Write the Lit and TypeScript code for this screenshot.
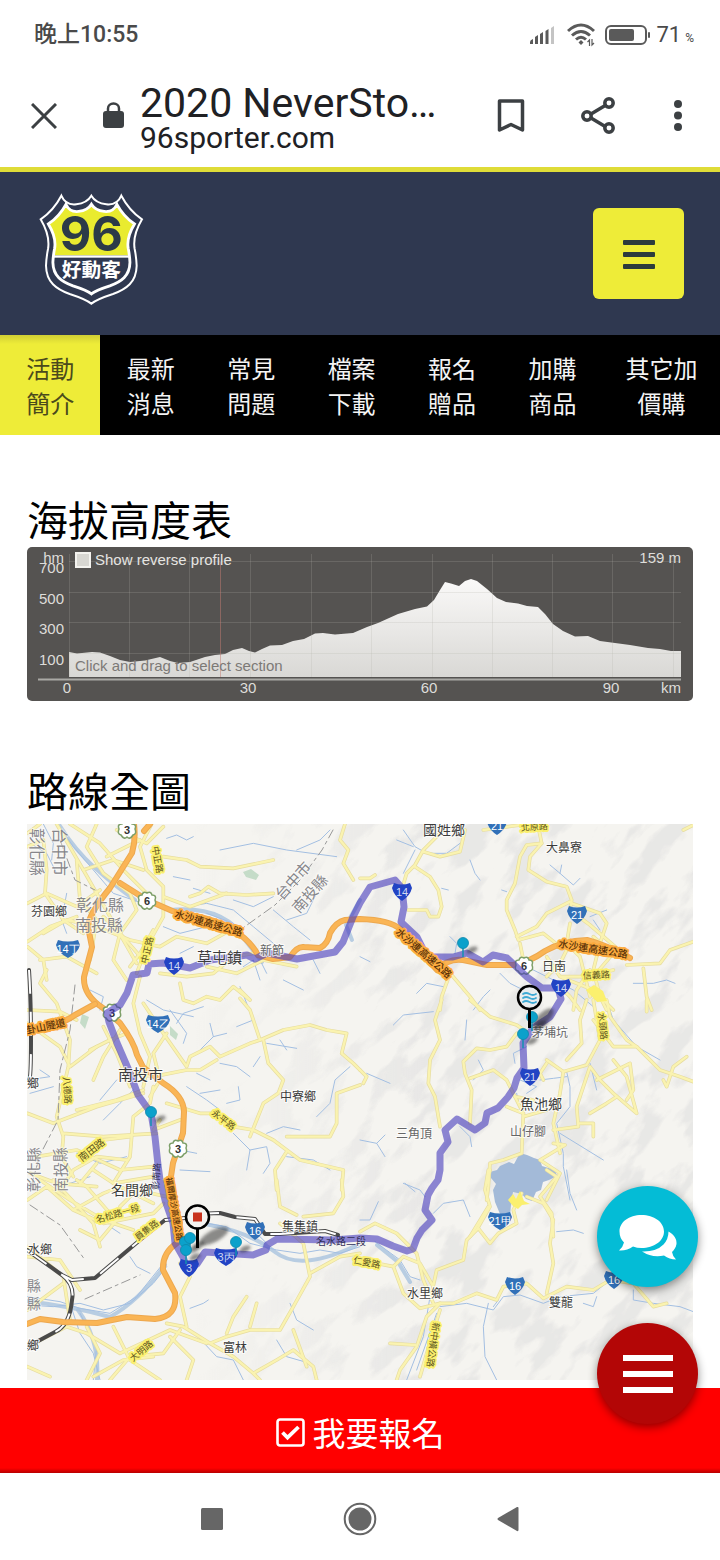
import { LitElement, html, svg, css } from "lit";
import { customElement, property } from "lit/decorators.js";

const NAV = [
  ["活動", "簡介"],
  ["最新", "消息"],
  ["常見", "問題"],
  ["檔案", "下載"],
  ["報名", "贈品"],
  ["加購", "商品"],
  ["其它加", "價購"],
];

/* ---------- elevation profile ---------- */

const PROFILE =
  "M69 652L77 653.5 92 652 100 652.5 110 656 120 660 130 662 145 660.5 160 657 170 661 178 663 190 662 205 657 215 655 225 654 233 650 242 648 249 651 255 652.5 262 649 270 645.5 282 645 293 641 304 639 315 633.5 323 633 335 634.5 353 633 367 627 378 623 398 614 415 609 427 606.5 434 600 440 590 445 582 451 583.5 459 586 465 581 471 579 477 581 487 589 497 598 506 602 518 603.5 527 606 538 607 545 614 553 624 563 631 575 636.5 588 636 600 641 615 643 630 645 648 648 660 649 671 651 681 651V677H69Z";
const GRID_X = [69, 129, 189, 250, 311, 371, 432, 492, 552, 612, 673];
const GRID_Y = [561, 592, 622, 653];
const Y_LABELS: [string, number][] = [["hm", 563], ["700", 573], ["500", 604], ["300", 634], ["100", 665]];
const X_LABELS: [string, number][] = [["0", 67], ["30", 248], ["60", 429], ["90", 611]];

/* ---------- route map ---------- */

const ROUTE =
  "M183 1257L175 1243 173 1223 165 1200 160 1180 158 1165 155 1137 151 1113 138 1095 130 1073 117 1043 109 1022 107 1013 120 1005 127 993 133 975 147 973 149 964 163 963 180 966 190 968 210 960 247 955 255 959 267 953 297 959 335 952 343 942 353 917 360 903 370 887 395 880 402 888 404 907 401 922 417 937 427 957 453 957 467 953 483 962 493 955 507 958 527 977 542 988 558 988 561 999 550 1017 533 1028 523 1043 524 1068 517 1078 514 1088 508 1097 498 1108 487 1113 485 1123 475 1130 457 1119 445 1130 448 1142 440 1153 440 1170 438 1180 432 1188 428 1195 425 1210 432 1220 422 1230 417 1238 413 1249 407 1251 393 1246 377 1239 360 1238 333 1240 277 1239 267 1245 266 1250 253 1255 205 1252 197 1264 187 1268Z";

const HIGHWAYS = [
  "M150 824L144 831M134 824Q136 840 132 853L110 888Q88 915 88 927L92 947 84 977Q83 995 103 1008L120 1023Q134 1042 137 1055L143 1067 163 1083Q184 1096 184 1112L183 1133 173 1163 170 1183 175 1205 180 1223 177 1243Q162 1253 163 1270L175 1293Q178 1317 155 1319L127 1317 97 1323 63 1322 40 1319 27 1324",
  "M27 1031Q60 1026 75 1015L95 1004",
  "M120 883L147 900 177 913Q215 918 233 930 250 940 258 955L273 959 290 957Q297 946 304 947L320 948Q328 944 330 933 336 922 345 920L360 919Q390 920 400 929L413 943 437 970Q448 958 463 960L487 965 513 965Q530 962 545 951 562 941 587 940 606 945 630 958",
];

/* Each tile holds paths drawn at three units per map unit from its own origin. */
const TILES = [
  {
    x: 20, y: 760,
    roads: [
      "M110 192L190 330 270 470 350 610M22 260L70 240 80 330 75 400 130 480 190 520M150 192L240 250 310 330 380 400M230 192L200 260 250 340 330 400 350 450 300 520 370 600M22 430L80 400 170 440 240 390M22 545L90 500 170 470",
      "M395 192L360 260 380 330 430 380 430 470 380 560 350 640M290 210L380 250 430 200M260 290L360 240M190 330L280 300 370 330M430 290L500 300 540 320 640 325 760 300M510 410L540 400 565 380 600 400 680 405 760 400M430 410L510 440 620 400",
      "M70 520L140 480 230 500 330 540 420 560 470 530 560 550 650 500M60 600L140 590 230 640M250 470L300 520 280 600 320 660M400 510L360 580 330 620M560 620L650 640 730 600 830 620M975 192L960 240 985 270 970 310 1000 360",
      "M22 220L60 192M22 560L70 600 80 660M170 300L180 420 230 480 210 600M420 640L500 650 580 640 640 590 700 580",
    ],
    rivers: [
      "M115 195L160 260 220 330 280 400 370 430M440 235L470 225 500 240 520 230M140 400L125 480 140 520M500 440L560 430 640 450 700 500 760 550M560 460L640 490 700 560 740 640M600 270L700 250 800 270 950 290M830 270L900 240 930 210M640 420L700 440 760 410M760 450L820 500 870 540M800 480L860 460 890 400M880 600L900 640M460 350L510 360M570 400L520 385",
      "M30 250L80 280 110 340M70 192L100 250 95 300M430 500L480 520 560 500M670 620L700 600 720 660M480 580L520 560",
    ],
  },
  {
    x: 360, y: 810,
    roads: [
      "M250 60L190 120 165 165 140 190 125 240M165 170L210 200 235 240 245 290 235 320 210 320 200 300 145 300M190 125L240 140 300 125 315 60M370 60L480 45 560 60M535 50L545 100 510 140 505 180 560 215 620 230 635 270 630 300 690 345 800 440",
      "M545 100L500 105 480 140 465 220 440 270 440 300 465 360 475 390 550 370 600 410 720 395M630 275L560 310 530 350 470 380M480 400L490 450M635 280L720 310 740 340 720 400 700 480 720 560 740 600M630 340L620 400 660 440 690 560",
      "M800 465L900 460 930 420 1000 395M850 475L860 560 875 600M270 490L245 560 240 600M275 495L330 560 360 600M560 440L600 500 700 540 760 600M600 500L680 500 760 480M630 400L600 460 560 500M690 480L650 540 640 600M590 520L630 560 660 600M700 380L760 430 700 500M0 205L30 205 45 195M970 60L1000 45",
    ],
    rivers: [
      "M130 60L165 110 200 130 260 130 300 100M165 120L130 190M110 90L160 110M570 165L600 190 640 225 660 205M600 190L605 165M690 320L740 300M245 235L265 240M420 490L450 520 530 560M500 470L560 500 640 540 700 590M170 550L200 520 250 530M340 600L370 560 390 540M0 440L30 455M330 150L345 190 360 210M270 380L290 400 285 430M820 520L880 520 920 510 945 520M425 240L440 245M700 330L720 360",
    ],
  },
  {
    x: 20, y: 970,
    roads: [
      "M80 0L60 40 110 100 150 210 145 290 110 440 130 500 125 560 160 620M22 120L120 125 170 150M22 160L120 230 150 290 230 230M22 430L100 460 230 410 370 370M130 490L250 500 410 490M170 420L290 390 370 360M50 560L170 540 300 600 400 590M180 570L250 510 330 500",
      "M480 40L490 90 520 100 560 80 600 90 640 50 690 90 660 60M660 85L690 120 720 210 690 220 600 260 570 230 510 260 500 290 430 190 370 100M720 210L790 180 870 165 920 180 980 190 965 250 1000 280 1020 300M730 210L745 280 790 330 775 370 730 400 710 450 690 500",
      "M360 20L340 100 360 190 390 260 370 350M440 190L400 250 420 330 390 380M250 170L290 250 330 350M300 300L400 320 500 300 540 300 590 270M400 350L390 400 340 440 330 560 280 640M440 400L540 430 580 430 640 470 700 480 760 510 800 540 840 570 970 600 965 660M800 500L930 500 950 460 950 370 1020 345M800 545L765 600 770 660",
      "M220 600L280 640 400 620M30 610L110 640 230 650M230 580L180 640M210 240L270 210 320 190M420 450L400 480 480 450M120 660L160 600 230 560 320 570M300 180L250 260 220 330",
    ],
    rivers: [
      "M380 90L430 120 520 140M450 120L500 190 490 220M540 240L580 200 570 160M580 200L620 190M660 50L700 150 650 170M740 220L830 235M780 210L800 240M600 280L650 290 690 320M700 290L720 260M620 400L660 390 655 350M500 350L560 390 600 420M540 370L600 360M250 450L300 400 340 360M240 390L290 330M22 330L90 320 60 300M30 370L100 350M640 490L690 540 680 600M690 540L740 530 750 580 730 610M800 560L880 570 930 600M480 600L570 605M480 540L530 550M790 30L850 60M150 640L210 620M170 550L240 580 320 560M210 60L250 80 240 120M470 160L490 130 550 110",
      "M740 490L790 470 840 480M890 440L930 400 945 330 990 290M530 310L570 330",
    ],
  },
  {
    x: 360, y: 1000,
    roads: [
      "M245 0L225 60 240 120 210 180 205 250 225 290 240 380M330 0L390 50 470 75 500 95M470 100L440 140 390 150 350 145 310 185 315 220 335 270 330 370M330 235L400 210 440 240 465 290 520 300M560 180L610 215 600 280 580 370 600 460M610 215L680 195 720 120 700 0M680 0L660 60 665 130 620 180",
      "M740 0L750 50 800 120 830 140 900 210 960 230 1000 245M700 60L760 140 830 140M910 240L920 260 940 200 980 170M760 180L800 230 830 340 760 280 720 240 690 200 650 320 655 380 580 390M560 190L540 220 550 240M465 290L490 340 485 460 430 480 390 490 385 560 380 600M490 350L560 330M655 370L700 370 700 410M580 430L615 435 540 480 600 520 560 600",
      "M0 210L20 230 10 250M860 0L860 35M440 320L490 340M710 240L810 190 820 270 800 300M690 340L740 310 770 290",
    ],
    rivers: [
      "M100 75L130 45 220 35M340 240L370 210 355 180M500 140L460 160 465 190M540 240L580 235 620 230M620 215L630 260 630 320 590 370 610 460 610 500 630 600M690 190L710 270M740 0L760 60 830 140 900 180M0 420L50 430 75 470M50 430L75 405M320 60L315 120M20 220L90 250M560 80L530 110M300 380L330 410 335 440M480 240L530 260 500 280M600 400L730 480M470 280L480 330M130 550L180 570 195 590",
    ],
  },
  {
    x: 20, y: 1180,
    roads: [
      "M22 60L80 20 160 90 250 40 300 20 400 70M60 0L150 60 250 120 340 150M100 0L220 130 240 200M160 90L250 130 400 100 430 70M22 200L130 290 150 420M22 230L120 240 180 330M22 390L130 310M22 500L140 440 200 460 300 520 450 450 560 490M280 440L330 540 420 600",
      "M22 560L90 590M440 430L490 440 570 490 620 470 690 450 780 450 820 380 870 290 850 190 780 130M480 250L510 290 480 350 500 440M620 460L640 410 680 350M690 440L710 370M570 490L640 530 700 580 720 600M700 580L770 540 820 510 880 560 890 600M480 450L430 520 330 530 270 600",
      "M870 280L960 230 1020 220M770 0L780 80 830 105M850 110L940 100 970 50 965 0M440 50L350 30 300 80M270 100L200 20 170 0M290 120L240 180 180 150M220 590L310 540 400 530M200 440L240 520 200 600M450 470L520 540 500 600M820 450L860 560",
    ],
    rivers: [
      "M22 350L120 365 180 385 270 400 350 350 390 300 430 250M22 375L100 380 180 370 250 390 330 370 400 310 440 260M330 230L350 260 390 280M150 370L180 460 220 520 240 600M180 400L230 500 220 600M560 130L620 140 690 190 770 210 840 220 900 210 960 220 1020 200M700 150L740 190M510 385L550 370 565 360M520 455L590 530 640 540 670 600M810 370L830 420 880 450M310 110L270 140 300 160M770 480L800 530 870 550",
    ],
  },
  {
    x: 360, y: 1170,
    roads: [
      "M385 0L375 60 390 110 350 180 320 210 310 270 230 300 215 370M355 175L390 220 415 190 470 160 460 120 485 70M500 80L550 100 580 150 570 220 580 280 560 370M0 185L45 160 110 190 170 250 190 330 220 400M0 270L100 290 130 260 180 280 220 350M100 290L130 370 180 415 240 400",
      "M240 400L280 400 350 370 410 390 430 350 500 340 550 385 620 350 700 360 750 330 820 340 880 410 920 400M240 400L200 440 170 530 120 600 110 630M240 420L215 500 180 620M90 520L165 525M330 200L385 110",
      "M560 0L590 20 540 80 575 130 580 200M390 0L380 40",
    ],
    rivers: [
      "M45 215L120 270 150 320 180 330M240 410L320 400 400 420 430 380 480 375 550 400 600 380 700 370 750 330M220 130L250 100 310 90 330 140M210 380L190 500 140 630M385 400L370 470 375 560 410 630M230 430L170 600M400 410L415 390M0 150L30 150 55 95M590 185L640 180 670 190M820 360L820 390 880 400 960 410 1000 425M620 0L630 70 650 120M670 400L700 410 710 380M135 40L165 65",
    ],
  },
];

const WATER = [
  "M490 1172L497 1170 500 1166 509 1162 514 1164 520 1153 527 1155 534 1158 540 1160 542 1166 555 1170 557 1176 549 1180 543 1182 541 1190 536 1192 532 1201 526 1199 522 1194 513 1192 511 1205 510 1216 504 1217 500 1214 495 1202 493 1190 496 1184 491 1178Z",
];

const RIVER_BANDS = [
  "M60 826Q75 850 95 868T135 900",
  "M352 940L346 925 360 900",
  "M170 910Q225 905 245 940L262 962",
  "M27 1301Q75 1307 110 1317 140 1300 165 1265",
  "M78 1310Q100 1340 97 1380",
  "M205 1224Q250 1232 275 1252T355 1246",
  "M377 1245L398 1262 410 1282",
];

type Label = { t: string; x: number; y: number; s: number; r?: number; k?: string };
const LABELS: Label[] = [
  { t: "國姓鄉", x: 423, y: 835, s: 14 },
  { t: "大鼻寮", x: 546, y: 852, s: 12 },
  { t: "芬園鄉", x: 31, y: 916, s: 12 },
  { t: "彰化縣", x: 76, y: 911, s: 16, k: "county" },
  { t: "南投縣", x: 75, y: 931, s: 16, k: "county" },
  { t: "彰化縣", x: 31, y: 828, s: 16, r: 90, k: "county" },
  { t: "台中市", x: 54, y: 828, s: 16, r: 90, k: "county" },
  { t: "台中市", x: 282, y: 901, s: 15, r: -48, k: "county" },
  { t: "南投縣", x: 299, y: 914, s: 15, r: -48, k: "county" },
  { t: "草屯鎮", x: 197, y: 963, s: 15 },
  { t: "新節", x: 260, y: 955, s: 12, k: "soft" },
  { t: "日南", x: 542, y: 971, s: 12 },
  { t: "南投市", x: 118, y: 1080, s: 15 },
  { t: "中寮鄉", x: 280, y: 1101, s: 12 },
  { t: "三角頂", x: 396, y: 1138, s: 12, k: "soft" },
  { t: "茅埔坑", x: 532, y: 1037, s: 12, k: "soft" },
  { t: "魚池鄉", x: 520, y: 1109, s: 14 },
  { t: "山仔腳", x: 510, y: 1136, s: 12, k: "soft" },
  { t: "名間鄉", x: 111, y: 1195, s: 14 },
  { t: "集集鎮", x: 282, y: 1231, s: 12 },
  { t: "水里鄉", x: 407, y: 1298, s: 12 },
  { t: "雙龍", x: 549, y: 1307, s: 12 },
  { t: "富林", x: 223, y: 1352, s: 12 },
  { t: "水鄉", x: 28, y: 1254, s: 12 },
  { t: "鄉", x: 27, y: 1088, s: 12 },
  { t: "鄉", x: 27, y: 1350, s: 12 },
  { t: "縣", x: 27, y: 1291, s: 14, k: "county" },
  { t: "縣", x: 27, y: 1309, s: 14, k: "county" },
  { t: "彰化縣", x: 39, y: 1192, s: 15, r: -90, k: "county" },
  { t: "南投縣", x: 66, y: 1192, s: 15, r: -90, k: "county" },
  { t: "水沙連高速公路", x: 174, y: 917, s: 10, r: 16, k: "hwy" },
  { t: "水沙連高速公路", x: 395, y: 933, s: 10, r: 41, k: "hwy" },
  { t: "水沙連高速公路", x: 558, y: 947, s: 10, r: 9, k: "hwy" },
  { t: "卦山隧道", x: 27, y: 1034, s: 10, r: -12, k: "hwy" },
  { t: "福爾摩沙高速公路", x: 166, y: 1178, s: 8, r: 80, k: "hwy" },
  { t: "中正路", x: 152, y: 847, s: 9, r: 80, k: "road" },
  { t: "中正路", x: 147, y: 964, s: 9, r: -76, k: "road" },
  { t: "北原路", x: 521, y: 831, s: 9, r: -4, k: "road" },
  { t: "信義路", x: 583, y: 979, s: 9, r: -3, k: "road" },
  { t: "水頭路", x: 598, y: 1013, s: 9, r: 84, k: "road" },
  { t: "八德路", x: 63, y: 1077, s: 9, r: 86, k: "road" },
  { t: "永平路", x: 211, y: 1114, s: 9, r: 38, k: "road" },
  { t: "南田路", x: 82, y: 1162, s: 10, r: -38, k: "road" },
  { t: "名松路一段", x: 97, y: 1223, s: 9, r: -16, k: "road" },
  { t: "員集路", x: 138, y: 1241, s: 9, r: -38, k: "road" },
  { t: "彰南路", x: 159, y: 1190, s: 9, r: -88, k: "onroute" },
  { t: "名水路二段", x: 316, y: 1245, s: 10, k: "onroute" },
  { t: "仁愛路", x: 353, y: 1263, s: 9, r: 11, k: "road" },
  { t: "大明路", x: 133, y: 1362, s: 9, r: -40, k: "road" },
  { t: "新中橫公路", x: 433, y: 1322, s: 9, r: 98, k: "road" },
];

type Shield = { t: string; x: number; y: number; under?: boolean };
const SHIELDS: Shield[] = [
  { t: "14", x: 402, y: 892, under: true },
  { t: "21", x: 497, y: 826 },
  { t: "21", x: 577, y: 915 },
  { t: "14丁", x: 68, y: 949 },
  { t: "14", x: 174, y: 966, under: true },
  { t: "14", x: 561, y: 988, under: true },
  { t: "14乙", x: 158, y: 1024 },
  { t: "21", x: 530, y: 1077, under: true },
  { t: "21甲", x: 500, y: 1221 },
  { t: "16", x: 255, y: 1231 },
  { t: "3丙", x: 226, y: 1257, under: true },
  { t: "3", x: 189, y: 1268, under: true },
  { t: "16", x: 515, y: 1286 },
  { t: "16", x: 614, y: 1280 },
];
const FREEWAYS: [string, number, number][] = [
  ["3", 127, 830], ["6", 147, 901], ["3", 112, 1013], ["6", 524, 966], ["3", 178, 1149],
];
const PINS = [
  [463, 943], [532, 1017], [523, 1034], [151, 1112], [185, 1242], [190, 1238], [186, 1250], [236, 1242],
];

@customElement("elevation-chart")
class ElevationChart extends LitElement {
  static styles = css`
    :host { display: block; }
    .chart { display: block; width: 100%; height: auto; font-family: "Liberation Sans", Arial, sans-serif; font-size: 15px; }
    .panel { fill: #555351; }
    .grid { stroke: #b0b0a8; stroke-opacity: .22; stroke-width: 1; fill: none; }
    .axis { stroke: #aaa9a5; stroke-width: 2; }
    .cursor { stroke: #c47b72; stroke-opacity: .5; stroke-width: 1; }
    .tick { fill: #deddda; }
    .hint { fill: #7c7976; }
    .end { text-anchor: end; }
    .mid { text-anchor: middle; }
    .toggle { display: flex; align-items: center; gap: 4px; color: #e6e5e2; font-size: 15px; line-height: 20px; white-space: nowrap; }
    .box { appearance: none; box-sizing: border-box; width: 16px; height: 16px; margin: 0; background: #d8d7d2; border: 2px solid #f4f3ef; }
    .box:checked { background: #555; }
  `;
  render() {
    return html`
      <svg class="chart" viewBox="27 547 666 154" role="img" aria-label="海拔高度表">
        <defs>
          <linearGradient id="snow" x1="0" y1="0" x2="0" y2="1">
            <stop offset="0" stop-color="#faf9f8" /><stop offset="1" stop-color="#d9d8d5" />
          </linearGradient>
        </defs>
        <rect class="panel" x="27" y="547" width="666" height="154" rx="5" />
        <path d=${PROFILE} fill="url(#snow)" />
        ${GRID_X.map((x) => svg`<path class="grid" d="M${x}.5 554V677" />`)}
        ${GRID_Y.map((y) => svg`<path class="grid" d="M69 ${y}.5H681" />`)}
        <path class="axis" d="M38 679.5H681" />
        <path class="cursor" d="M220.5 562V677" />
        ${Y_LABELS.map(([t, y]) => svg`<text class="tick end" x="64" y=${y}>${t}</text>`)}
        ${X_LABELS.map(([t, x]) => svg`<text class="tick mid" x=${x} y="693">${t}</text>`)}
        <text class="tick end" x="681" y="693">km</text>
        <text class="tick end" x="681" y="563">159 m</text>
        <text class="hint" x="75" y="671">Click and drag to select section</text>
        <foreignObject x="75" y="550" width="180" height="22">
          <label class="toggle"><input class="box" type="checkbox" />Show reverse profile</label>
        </foreignObject>
      </svg>`;
  }
}

@customElement("route-map")
class RouteMap extends LitElement {
  static styles = css`
    :host { display: block; }
    .map { display: block; width: 100%; height: auto; font-family: "Noto Sans CJK TC", "Noto Sans CJK SC", sans-serif; }
    .line { fill: none; stroke-linecap: round; stroke-linejoin: round; }
    .case { stroke: #e6dca0; stroke-width: 11; }
    .road { stroke: #faf3b0; stroke-width: 7; }
    .river { stroke: #a3bfe2; stroke-width: 3; }
    .band { stroke: #a9c3de; stroke-width: 4; stroke-opacity: .8; }
    .water { fill: #a3bad8; }
    .hwcase { stroke: #eda84f; stroke-width: 6; }
    .hw { stroke: #fab555; stroke-width: 4; }
    .border { stroke: #999; stroke-width: 1; stroke-dasharray: 9 4 3 4; }
    .railcase { stroke: #4a4a4a; stroke-width: 4; }
    .rail { stroke: #fff; stroke-width: 2; stroke-dasharray: 24 18; stroke-linecap: butt; }
    .route { stroke: #4538bc; stroke-width: 7; stroke-opacity: .6; }
    .town { fill: #3c3c3c; stroke: #fff; stroke-width: 2; stroke-opacity: .75; paint-order: stroke; }
    .soft { fill: #666; stroke: #fff; stroke-width: 2; stroke-opacity: .75; paint-order: stroke; }
    .county { fill: #86868a; stroke: #fff; stroke-width: 2; stroke-opacity: .5; paint-order: stroke; }
    .hwy { fill: #5a3208; stroke: #fcab3e; stroke-width: 4; stroke-linejoin: round; paint-order: stroke; font-weight: 500; }
    .onroute { fill: #33305a; }
    .roadname { fill: #5c5320; stroke: #fbf06e; stroke-width: 4; stroke-linejoin: round; paint-order: stroke; }
    .num { fill: #fff; font-family: "Liberation Sans", Arial, sans-serif; font-size: 11px; text-anchor: middle; }
    .fnum { fill: #333; font-family: "Liberation Sans", Arial, sans-serif; font-size: 11px; font-weight: 700; text-anchor: middle; }
    .flower { fill: #fff; stroke: #7d9f68; stroke-width: 1.5; }
    .shadow { fill: #222; fill-opacity: .5; }
  `;

  private shield(s: Shield) {
    const w = s.t.length > 2 || s.t === "3丙" ? 12 : 10;
    const y = s.y;
    return svg`
      <path fill=${s.under ? "#2243c4" : "#3170b8"}
        d="M${s.x - w + 2} ${y - 9}Q${s.x} ${y - 6} ${s.x + w - 2} ${y - 9}L${s.x + w} ${y - 4}Q${s.x + w - 2} ${y + 4} ${s.x} ${y + 9}Q${s.x - w + 2} ${y + 4} ${s.x - w} ${y - 4}Z" />
      <text class="num" fill-opacity=${s.under ? 0.8 : 1} x=${s.x} y=${y + 4}>${s.t}</text>`;
  }

  private pin([x, y]: number[]) {
    return svg`
      <ellipse class="shadow" cx=${x + 9} cy=${y + 7} rx="6" ry="3" filter="url(#soften)" transform="rotate(-25 ${x + 9} ${y + 7})" />
      <path d="M${x} ${y}v14" stroke="#1291b0" stroke-width="1.5" />
      <circle cx=${x} cy=${y} r="5.5" fill="#0ba1cb" stroke="#0c86ab" stroke-width=".8" />`;
  }

  render() {
    return html`
      <svg class="map" viewBox="27 824 666 556" role="img" aria-label="路線全圖">
        <defs>
          <clipPath id="frame"><rect x="27" y="824" width="666" height="556" /></clipPath>
          <filter id="soften" x="-50%" y="-50%" width="200%" height="200%"><feGaussianBlur stdDeviation="1.5" /></filter>
          <filter id="relief" x="0" y="0" width="100%" height="100%">
            <feTurbulence type="fractalNoise" baseFrequency=".018 .042" numOctaves="4" seed="11" />
            <feColorMatrix values="0 0 0 0 .68  0 0 0 0 .68  0 0 0 0 .69  7 0 0 0 -3.5" />
          </filter>
          <linearGradient id="fade" x1="0" x2="1" y1="0" y2="0">
            <stop offset=".25" stop-color="#000" /><stop offset=".6" stop-color="#fff" />
          </linearGradient>
          <mask id="hills" maskUnits="userSpaceOnUse" x="27" y="824" width="666" height="556">
            <rect x="27" y="824" width="666" height="556" fill="url(#fade)" />
          </mask>
        </defs>
        <g clip-path="url(#frame)">
          <rect x="27" y="824" width="666" height="556" fill="#f5f4f0" />
          <g mask="url(#hills)">
            <g transform="rotate(-48 360 1100)" opacity=".42">
              <rect x="-140" y="600" width="1000" height="1000" filter="url(#relief)" />
            </g>
          </g>
          ${RIVER_BANDS.map((d) => svg`<path class="line band" d=${d} />`)}
          ${WATER.map((d) => svg`<path class="water" d=${d} />`)}
          ${TILES.map((t) => svg`<g transform="translate(${t.x} ${t.y}) scale(.33333)">
            ${t.rivers.map((d) => svg`<path class="line river" d=${d} />`)}
          </g>`)}
          ${TILES.map((t) => svg`<g transform="translate(${t.x} ${t.y}) scale(.33333)">
            ${t.roads.map((d) => svg`<path class="line case" d=${d} />`)}
          </g>`)}
          ${TILES.map((t) => svg`<g transform="translate(${t.x} ${t.y}) scale(.33333)">
            ${t.roads.map((d) => svg`<path class="line road" d=${d} />`)}
          </g>`)}
          <path fill="#fbf06e" d="M508 1200l5-6 3 5 4-8 4 10 6 3-8 1-4 4-5-3z M586 990l8-5 9 6 4 10-10 1z" />
          <path fill="#c5dcc8" d="M243 872l8-3 8 6-3 5-10-3z M82 1014l7 3-4 12-5-6z M170 1026l8 8-2 6-6-5z" />
          <path class="line border" d="M333 830L322 850 300 880 275 905 240 930M60 840L75 880 95 890M75 985L70 1030 60 1070 58 1120 40 1155 30 1190M30 1205L60 1225 85 1260M85 1299L140 1275" />
          <path class="line railcase" d="M29 970Q31 1000 31 1040T29 1080M27 1250L62 1275 72 1280 95 1278 140 1240 165 1220 185 1218M62 1275Q75 1285 72 1300 70 1325 55 1332L27 1347M195 1214L220 1213 235 1217 255 1219 265 1234 280 1234 325 1231 338 1235" />
          <path class="line rail" d="M29 970Q31 1000 31 1040T29 1080M27 1250L62 1275 72 1280 95 1278 140 1240 165 1220 185 1218M62 1275Q75 1285 72 1300 70 1325 55 1332L27 1347M195 1214L220 1213 235 1217 255 1219 265 1234 280 1234 325 1231 338 1235" />
          ${HIGHWAYS.map((d) => svg`<path class="line hwcase" d=${d} /><path class="line hw" d=${d} />`)}
          ${FREEWAYS.map(([t, x, y]) => svg`
            <path class="flower" d="M${x} ${y - 8}q4-2 5 2 5 0 3 5 2 5-2 6-3 5-6 2-3 3-6-2-4-1-2-6-2-5 3-5 1-4 5-2z" />
            <text class="fnum" x=${x} y=${y + 4}>${t}</text>`)}
          <path class="line route" d=${ROUTE} />
          ${LABELS.map((l) => svg`<text
            class=${!l.k ? "town" : l.k === "road" ? "roadname" : l.k}
            font-size=${l.s} x=${l.x} y=${l.y}
            transform="rotate(${l.r ?? 0} ${l.x} ${l.y})">${l.t}</text>`)}
          ${SHIELDS.map((s) => this.shield(s))}
          <ellipse class="shadow" cx="214" cy="1236" rx="16" ry="6" filter="url(#soften)" transform="rotate(-28 214 1236)" />
          <ellipse class="shadow" cx="543" cy="1019" rx="14" ry="6" filter="url(#soften)" transform="rotate(-45 543 1019)" />
          ${PINS.map((p) => this.pin(p))}
          <path d="M197.500 1228V1248M529.500 1008V1028" stroke="#000" stroke-width="3" />
          <circle cx="197.500" cy="1217" r="11.500" fill="#f5f3f0" stroke="#000" stroke-width="2.500" />
          <rect x="193" y="1212.500" width="9" height="9" fill="#c8321c" />
          <circle cx="529.500" cy="997.500" r="11.500" fill="#e9ecee" stroke="#000" stroke-width="2.500" />
          <path class="line" d="M523 994q3-2 6.500 0t6.500 0M523 998q3-2 6.500 0t6.500 0M523 1002q3-2 6.500 0t6.500 0" stroke="#3fa9d4" stroke-width="1.800" />
        </g>
      </svg>`;
  }
}

@customElement("app-root")
class AppRoot extends LitElement {
  @property({ type: Number }) active = 0;

  static styles = css`
    :host {
      display: flex; flex-direction: column; min-height: 100vh; background: #fff; color: #000;
      font-family: Roboto, "Noto Sans CJK TC", "Noto Sans CJK SC", sans-serif;
    }
    button { border: 0; padding: 0; background: none; color: inherit; font: inherit; display: grid; place-items: center; }
    a { color: inherit; text-decoration: none; }
    svg { display: block; }

    .status { display: flex; align-items: center; height: 68px; padding: 2px 26px 0 34px; box-sizing: border-box; color: #4a4a4a; }
    .clock { flex: 1; font-size: 23px; font-weight: 500; line-height: 28px; }
    .signals { display: flex; align-items: center; gap: 10px; }
    .battery { display: flex; align-items: center; gap: 6px; }
    .level { font-size: 22px; line-height: 28px; }
    .percent { font-size: 12px; }

    .browser { display: flex; align-items: center; height: 99px; box-sizing: border-box; padding: 0 36px 4px 31px; color: #3c4043; }
    .lock { margin: 0 16px 0 46px; }
    .address { flex: 1; min-width: 0; padding-top: 2px; color: #202124; white-space: nowrap; }
    .title { font-size: 41px; line-height: 42px; }
    .url { font-size: 30px; line-height: 28px; }
    .tools { display: flex; align-items: center; gap: 55px; }

    .site { display: flex; align-items: center; justify-content: space-between; height: 168px; box-sizing: border-box; padding: 0 36px 0 39px; background: #2f3850; border-top: 5px solid #dfdc38; }
    .logo { padding-bottom: 10px; }
    .logotext { font-family: "Noto Sans CJK TC", sans-serif; font-size: 59px; font-weight: 700; fill: #fff; text-anchor: middle; }
    .lognum { font-family: Inter, sans-serif; font-size: 146px; font-weight: 700; fill: #2c3a48; text-anchor: middle; }
    .burger { width: 91px; height: 91px; border-radius: 6px; background: #eeec38; }

    .tabs { display: grid; grid-template-columns: repeat(6, 6fr) 7fr; background: #000; color: #f4f4f4; font-family: "Noto Sans CJK TC", sans-serif; font-size: 24px; line-height: 35px; text-align: center; }
    .tab { padding: 15px 0; }
    .tab.on { color: #4a4a1c; background: linear-gradient(#d0ce34, #eeec38 9px); }
    .row { display: block; }

    main { flex: 1; padding: 59px 27px 8px; }
    h2 { margin: 0; font-family: "Noto Sans CJK TC", sans-serif; font-size: 41px; font-weight: 400; line-height: 48px; }
    .profile { margin: 5px 0 64px; }
    .route { margin: 11px 0 0; }

    .dock { position: relative; }
    .signup { display: flex; align-items: center; justify-content: center; gap: 8px; height: 85px; box-sizing: border-box; padding-top: 4px; background: linear-gradient(#f00 80px, #b80000); color: #fff; font-family: "Noto Sans CJK TC", sans-serif; font-size: 33px; line-height: 40px; }
    .label { padding-bottom: 2px; }
    .fabs { position: absolute; right: 22px; bottom: 49px; display: flex; flex-direction: column; gap: 36px; }
    .fab { width: 101px; height: 101px; border-radius: 50%; box-shadow: 0 3px 10px rgba(0, 0, 0, .45); }
    .chat { background: #04bcd6; }
    .more { background: #b30606; }

    .system { display: grid; grid-template-columns: 1fr 34px 1fr; align-items: center; height: 87px; box-sizing: border-box; padding-top: 4px; column-gap: 120px; color: #666; }
    .recent { justify-self: end; }
    .back { justify-self: start; }
  `;

  private logo() {
    const shield =
      "M95 30Q108 60 140 56 172 52 185 30 198 52 230 56 262 60 275 30 298 74 337 101 308 150 315 190 320 215 321 240C320 290 290 310 250 325 210 338 195 346 185 354 175 346 160 338 120 325 80 310 50 290 49 240Q50 215 55 190 62 150 33 101 72 74 95 30Z";
    return html`
      <svg width="105" height="112" viewBox="28 22 315 336" role="img" aria-label="96 好動客">
        <defs>
          <clipPath id="inner"><path d=${shield} transform="translate(28 31) scale(.85 .83)" /></clipPath>
        </defs>
        <path d=${shield} fill="none" stroke="#fff" stroke-width="6" />
        <g clip-path="url(#inner)">
          <rect x="28" y="22" width="315" height="187" fill="#e9eb2f" />
          <rect x="28" y="209" width="315" height="7" fill="#fff" />
        </g>
        <path d=${shield} fill="none" stroke="#fff" stroke-width="10" transform="translate(28 31) scale(.85 .83)" />
        <text class="lognum" x="185" y="195">96</text>
        <text class="logotext" x="185" y="275">好動客</text>
      </svg>`;
  }

  render() {
    return html`
      <div class="status">
        <span class="clock">晚上10:55</span>
        <div class="signals">
          <svg width="28" height="20" viewBox="0 0 28 20" fill="#5a5a5a" aria-hidden="true">
            <path d="M1 19v-2q0-2 3-3v5zM6 19v-7l3-2v9zM11 19V9l3-2v12zM16.500 19V6l3-2v15z" />
            <path d="M22 19V3l3-2v18z" fill="#c4c4c4" />
          </svg>
          <svg width="28" height="24" viewBox="0 0 28 24" fill="none" stroke="#5a5a5a" stroke-width="3" aria-hidden="true">
            <path d="M1 8Q14-4 27 8M5 12.500Q14 4.500 23 12.500M9 16.500Q14 12 19 16.500" />
            <path d="M14 17l2.500 2.500L14 22l-2.500-2.500z" fill="#5a5a5a" stroke="none" />
            <path d="M22.500 23v-6l-2 2M25 16v6l2-2" stroke-width="1.200" />
          </svg>
          <div class="battery">
            <svg width="46" height="20" viewBox="0 0 46 20" aria-hidden="true">
              <rect x="1" y="1" width="40" height="18" rx="5" fill="none" stroke="#5a5a5a" stroke-width="2" />
              <rect x="4" y="4" width="25" height="12" rx="2" fill="#5a5a5a" />
              <rect x="43" y="7" width="2" height="6" rx="1" fill="#5a5a5a" />
            </svg>
            <span><span class="level">71</span> <span class="percent">%</span></span>
          </div>
        </div>
      </div>

      <div class="browser">
        <button aria-label="關閉">
          <svg width="26" height="26" viewBox="0 0 26 26" fill="none" stroke="currentColor" stroke-width="3"><path d="M1 1l24 24M25 1L1 25" /></svg>
        </button>
        <svg class="lock" width="21" height="28" viewBox="0 0 21 28" aria-hidden="true">
          <rect x="0" y="9" width="21" height="17" rx="3" fill="currentColor" />
          <path d="M5 10V6.500a5.500 5 0 0 1 11 0V10" fill="none" stroke="currentColor" stroke-width="2.500" />
        </svg>
        <div class="address">
          <div class="title">2020 NeverSto…</div>
          <div class="url">96sporter.com</div>
        </div>
        <div class="tools">
          <button aria-label="加入書籤">
            <svg width="30" height="36" viewBox="0 0 30 36" fill="none" stroke="currentColor" stroke-width="3.500"><path d="M3.500 3H26.500V32L15 26.500 3.500 32Z" stroke-linejoin="round" /></svg>
          </button>
          <button aria-label="分享">
            <svg width="36" height="38" viewBox="0 0 36 38" fill="none" stroke="currentColor" stroke-width="3.500">
              <path d="M10 17L25 8M10 21l15 9" />
              <circle cx="6" cy="19" r="4.200" /><circle cx="28" cy="6" r="4.200" /><circle cx="28" cy="31" r="4.200" />
            </svg>
          </button>
          <button aria-label="更多選項">
            <svg width="12" height="32" viewBox="0 0 12 32" fill="currentColor"><circle cx="6" cy="4" r="4" /><circle cx="6" cy="15.500" r="4" /><circle cx="6" cy="27" r="4" /></svg>
          </button>
        </div>
      </div>

      <header class="site">
        <a class="logo" href="#home">${this.logo()}</a>
        <button class="burger" aria-label="選單">
          <svg width="32" height="32" viewBox="0 0 32 32" fill="#2d3b3c"><rect y="2" width="32" height="5" rx="1" /><rect y="14" width="32" height="5" rx="1" /><rect y="26" width="32" height="5" rx="1" /></svg>
        </button>
      </header>

      <nav class="tabs">
        ${NAV.map((rows, i) => html`
          <a class="tab ${i === this.active ? "on" : ""}" href="#tab-${i}" @click=${() => (this.active = i)}>
            ${rows.map((r) => html`<span class="row">${r}</span>`)}
          </a>`)}
      </nav>

      <main>
        <h2>海拔高度表</h2>
        <elevation-chart class="profile"></elevation-chart>
        <h2>路線全圖</h2>
        <route-map class="route"></route-map>
      </main>

      <div class="dock">
        <a class="signup" href="#signup">
          <svg width="29" height="29" viewBox="0 0 29 29" fill="none" stroke="#fff" aria-hidden="true">
            <rect x="1.500" y="1.500" width="26" height="26" rx="2.500" stroke-width="2.600" />
            <path d="M6.500 14.500l5 5 11-10.500" stroke-width="3.800" />
          </svg>
          <span class="label">我要報名</span>
        </a>
        <div class="fabs">
          <button class="fab chat" aria-label="聊天">
            <svg width="60" height="48" viewBox="0 0 60 48" fill="#fff">
              <path d="M50.500 18.500C56 21.500 59 26 58.500 31 58 34.500 56 37 54 39Q54.500 43 58 46.500 51.500 46.500 46 42.500 34 45 24 38.500 38 39 45.500 31.500 50.500 26 50.500 18.500Z" />
              <path d="M23.500 2C36 2 46 9 46 18.500S36 35 23.500 35Q19 35 15 33.500 9 38 1 37.500 5 34 6 29.500 1.500 25 1.500 18.500C1.500 9 11 2 23.500 2Z" />
            </svg>
          </button>
          <button class="fab more" aria-label="更多">
            <svg width="50" height="40" viewBox="0 0 50 40" fill="#fff"><rect y="1" width="50" height="6" /><rect y="17" width="50" height="6" /><rect y="33" width="50" height="6" /></svg>
          </button>
        </div>
      </div>

      <div class="system">
        <button class="recent" aria-label="最近">
          <svg width="22" height="22" viewBox="0 0 22 22"><rect width="22" height="22" rx="1.500" fill="currentColor" /></svg>
        </button>
        <button aria-label="主畫面">
          <svg width="34" height="34" viewBox="0 0 34 34"><circle cx="17" cy="17" r="15.300" fill="none" stroke="currentColor" stroke-width="2" /><circle cx="17" cy="17" r="11.500" fill="currentColor" /></svg>
        </button>
        <button class="back" aria-label="返回">
          <svg width="22" height="26" viewBox="0 0 22 26"><path d="M1 12Q0 13 1 14L20 25Q21.500 25.500 21.500 24V2Q21.500.500 20 1Z" fill="currentColor" /></svg>
        </button>
      </div>
    `;
  }
}
